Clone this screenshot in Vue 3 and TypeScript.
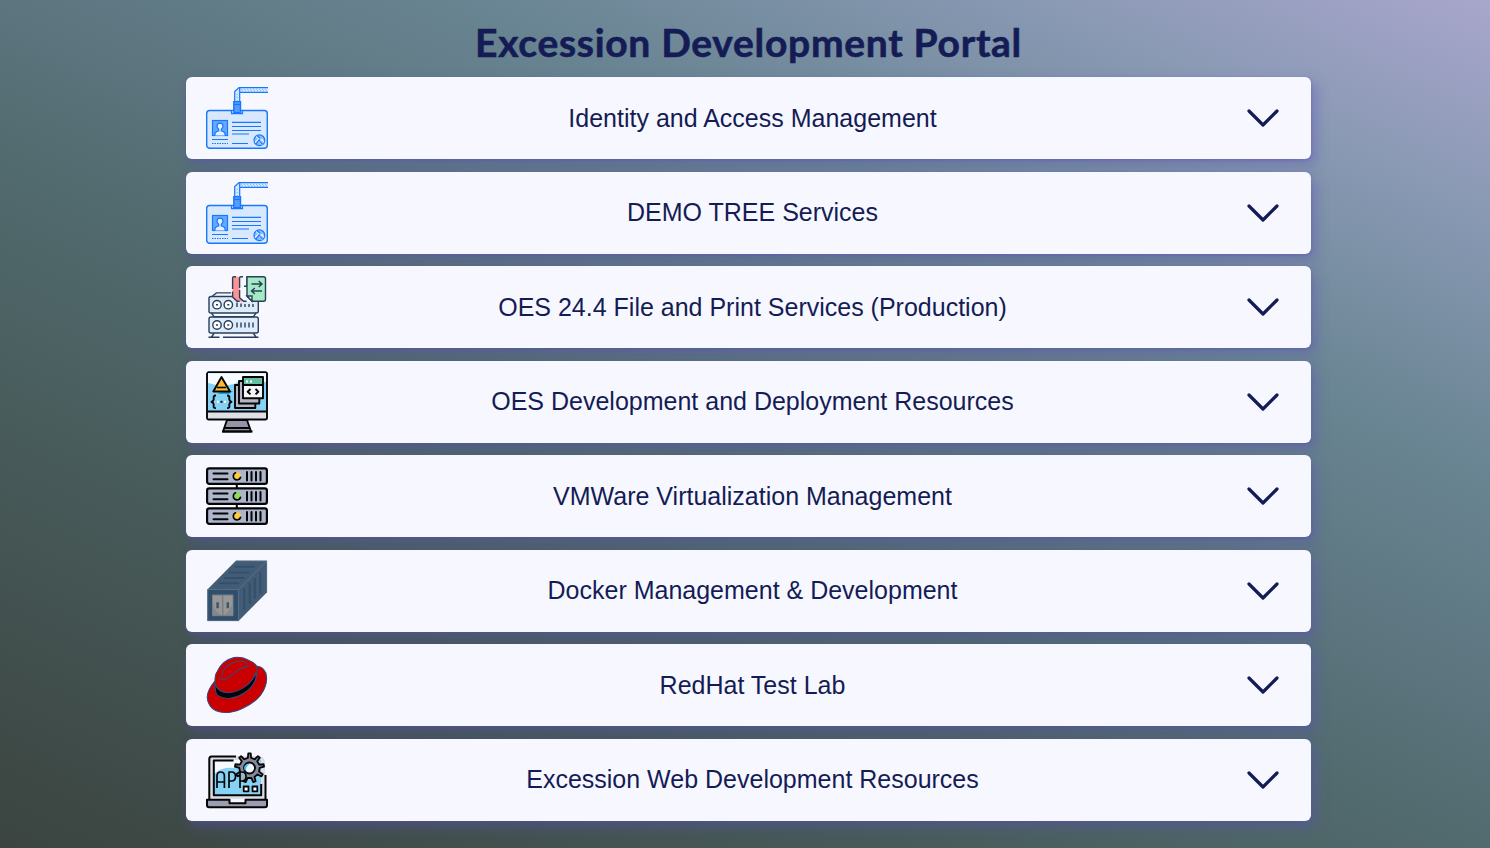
<script setup lang="ts">
type Icon = 'badge' | 'files' | 'dev' | 'servers' | 'container' | 'hat' | 'app'
const sections: { title: string; icon: Icon }[] = [
  { title: 'Identity and Access Management', icon: 'badge' },
  { title: 'DEMO TREE Services', icon: 'badge' },
  { title: 'OES 24.4 File and Print Services (Production)', icon: 'files' },
  { title: 'OES Development and Deployment Resources', icon: 'dev' },
  { title: 'VMWare Virtualization Management', icon: 'servers' },
  { title: 'Docker Management & Development', icon: 'container' },
  { title: 'RedHat Test Lab', icon: 'hat' },
  { title: 'Excession Web Development Resources', icon: 'app' },
]

// Outline of a cog: each tooth contributes two root and two tip points.
function cog(cx: number, cy: number, root: number, tip: number, teeth: number): string {
  const step = (Math.PI * 2) / teeth
  const points: string[] = []
  for (let i = 0; i < teeth; i++) {
    const a = i * step - Math.PI / 2
    for (const [offset, r] of [[-0.23, root], [-0.12, tip], [0.12, tip], [0.23, root]]) {
      const t = a + offset * step
      points.push(`${(cx + Math.cos(t) * r).toFixed(2)} ${(cy + Math.sin(t) * r).toFixed(2)}`)
    }
  }
  return `M${points.join('L')}Z`
}
const gear = cog(43.5, 19, 10.2, 14.6, 9)
</script>

<template>
  <main class="page">
    <h1 class="heading">Excession Development Portal</h1>
    <div class="list">
      <button v-for="s in sections" :key="s.title" class="card" type="button">
        <svg v-if="s.icon === 'badge'" class="icon" viewBox="0 0 62 62" fill="none" stroke="#1677ff" stroke-width="1.2">
          <path d="M28.700 15V4.500L33 .600H62V5.400H33.700V15z" fill="#d5e8ff" stroke="none"/>
          <path d="M28.700 15V4.500L33 .600H62M33.700 15V5.400H62M33.700 5.400V.600"/>
          <path d="M31.200 14V5M35 2.300h27M36 3.800h26" stroke="#69a9ff" stroke-width=".9" stroke-dasharray="1 2"/>
          <rect x=".7" y="23.500" width="60.600" height="37.800" rx="3" fill="#d8e9ff" stroke-width="1.400"/>
          <path d="M25.500 23.500h11v3.200h-11z" fill="#b8d7ff"/>
          <path d="M27.800 14.600h6.700v11h-6.700z" fill="#549cfa" stroke-width="1.400"/>
          <path d="M28 17.500h6.500"/>
          <rect x="6.500" y="33.500" width="15" height="15" fill="#66a8ff"/>
          <path d="M9 48.500v-2.500q2-2 3.700-2v-1.700Q11 41 11 39q.3-2.800 3-2.800t3 2.800q0 2-1.700 3.300V44q2 0 3.700 2v2.500" fill="#e4f0ff"/>
          <path d="M26 35.300h29M26 39.500h29M26 43.500h29M26 47h17M6 52.500h16M26 56.500h16"/>
          <path d="M6 56.500h16" stroke-dasharray="1.500 1"/>
          <circle cx="53.400" cy="53.300" r="5.400" fill="#8bbcff"/><path d="m49 55.500 3-3 4 5m-2-3 2-2 2 3m-8-6 3 2" stroke="#eaf4ff"/><path d="m50 57 3-4 3 4m-5-8 3 2"/>
        </svg>
        <svg v-else-if="s.icon === 'files'" class="icon" viewBox="0 0 62 62" fill="#deebfa" stroke="#293f59" stroke-width="1.4">
          <path d="M6.500 20 10.500 16.900h14.500" fill="none"/>
          <rect x="3" y="20.500" width="49.300" height="16.500" rx="2"/><rect x="3" y="41" width="49.300" height="16" rx="2"/>
          <path d="M5.500 37l2.500 3.600h39.500l2.500-3.600M8 57.500 5.500 61M47.500 57.500 50 61M2.500 61.200h11m3.500 0h35.500" fill="none"/>
          <g fill="white"><circle cx="11" cy="28.700" r="4.200"/><circle cx="22.300" cy="28.700" r="4.200"/><circle cx="11" cy="49" r="4.200"/><circle cx="22.300" cy="49" r="4.200"/></g>
          <path d="M10 28.700h2m9.300 0h2M10 49h2m9.300 0h2M31 46.500v5m4-5v5m4-5v5m4-5v5m4-5v5M31 26.500v4.500m4-3.500v3.500m4-3v3m4-3v3m4-3v3" fill="none"/>
          <path d="M26 0h34v26H31l-5-5z" fill="#f7f8ff" stroke="none"/>
          <path d="M26.600.7h7v21l4 3.800h-6l-5-4z" fill="#ff9293" stroke="none"/>
          <path d="M30 .7h-2q-1.400 0-1.400 1.300v11M26.600 15.500V21l4.500 4.300h2.500M37 .7h-2q-1.400 0-1.400 1.300v10M33.600 14v7.700l4 3.600h3M41 .7v9.500M38 10.200h3" fill="none"/>
          <path d="M41 .7h16.500q2 0 2 2v20.600q0 2-2 2H46l-5-5z" fill="#a4eac5"/>
          <path d="M46 25v-5h-5z" fill="#f7f8ff"/><path d="M45.500 8h10.500m-3.300-3 3.300 3-3.300 3M56 15H45.500m3.300-3-3.300 3 3.300 3" fill="none"/>
        </svg>
        <svg v-else-if="s.icon === 'dev'" class="icon" viewBox="0 0 62 62" fill="none" stroke="#050505" stroke-width="1.9" stroke-linejoin="round">
          <rect x="1" y="1.300" width="60" height="47.200" rx="1.800" fill="#dedfe7"/><path d="M2 2.300h58v38H2z" fill="#86d2f5" stroke="none"/><path d="M2 2.300h58v9Q43 5 28 13 15 16 2 12" fill="#f6fbff" stroke="none"/>
          <path d="M2 40.500h58"/><path d="M21 49h20l4 11.500H17z" fill="#9496a8"/><path d="M18 57h26M16 60.500h30.500"/>
          <path d="M17 20h10l-4 3H11z" fill="#199fd4" stroke="none"/><path d="M15.500 6 7.300 20.500H24z" fill="#ffb832"/><path d="M11 16.500h9" stroke-width="1.600"/>
          <path d="M10 24.500c-3.500 0-2 2-2.300 3.800-.2 1.400-1 2-2.200 2.500 1.200.5 2 1.100 2.200 2.500.3 1.800-1.200 3.800 2.300 3.800M21 24.500c3.500 0 2 2 2.300 3.800.2 1.400 1 2 2.200 2.500-1.200.5-2 1.100-2.200 2.500-.3 1.800 1.200 3.800-2.300 3.800"/>
          <path d="M11 30.800h2m5 0h2" stroke="white"/><path d="M14.500 30.800h2"/>
          <path d="M33 14h-4v23h20.300v-4" fill="#b4b6c6"/><path d="M37 10h-4v22.500h20.300V28" fill="#b4b6c6"/><rect x="37" y="6" width="20" height="21.300" fill="#f5f5fa"/><path d="M38 7h18v6.300H38z" fill="#65bfa0" stroke="none"/><path d="M37 14h20M44.500 18l-2.800 2.700 2.800 2.700M49.500 18l2.800 2.700-2.800 2.700"/><path d="M40 10.500h2m2 0h2" stroke="white"/>
        </svg>
        <svg v-else-if="s.icon === 'servers'" class="icon" viewBox="0 0 62 62" fill="none" stroke="#050505" stroke-width="2" stroke-linecap="round">
          <path d="M30.800 19v24"/>
          <g v-for="i in 3" :key="i" :transform="`translate(0 ${(i - 1) * 20})`">
            <rect x="1.100" y="3.300" width="59.800" height="15.600" rx="2.200" fill="#adb5cb" stroke-width="2.200"/><path d="M7.500 8.500h14M7.500 14.200h14M41 7v8.500m4.500-8.500v8.500m4.500-8.500v8.500m4.500-8.500v8.500"/>
            <circle cx="31.300" cy="11" r="3.700" :fill="i === 2 ? '#8dde59' : '#ffcb42'" stroke="none"/><path d="M29.500 7.800a3.700 3.700 0 1 0 5 4.600" stroke-width="1.700"/>
          </g>
        </svg>
        <svg v-else-if="s.icon === 'container'" class="icon" viewBox="0 0 62 62" fill="none">
          <path d="M1.500 29.500 30 .700h31v31.500L32.500 61h-31z" fill="#435c75"/><path d="M1.500 29.500h31V61h-31z" fill="#304e6e"/>
          <path d="M1.800 60.700V29.500h30.700v31.200zm30.700-31.200L60.700.900v31.300L32.500 60.700M1.800 29.500 30 .900h30.700" stroke="#64788d" stroke-width=".7"/>
          <path d="M28.500 6.800H49M23 12.500h20.500M18 18h20.500M12.700 23.200h20.500M38.300 28v21.500M43.700 23v21M48.800 18v21M54.300 12.500V34" stroke="#344f6b" stroke-width="2"/>
          <path d="M6.500 35h20.500v20.700H6.500z" fill="#989797" stroke="#757f86"/><path d="M16.800 35v20.500" stroke="#6d7275"/><path d="M7 45v10.200h9Q9 52 7 45M18 55.200h8.500V43q-2 8-8.500 12.200" fill="#85898b"/><path d="M11.600 42.300v6m10.200-6v6" stroke="#3f556b" stroke-width="2.500"/>
        </svg>
        <svg v-else-if="s.icon === 'hat'" class="icon" viewBox="0 0 62 62" fill="#ca0000" stroke="#3e4477" stroke-width="1.100" stroke-linejoin="round">
          <path d="M9 27C3 34 1.500 38 1.200 43c0 5 3 12 11 14.500 7 2 17 1 25-3.500 8-4 14-8 17.500-13C59 35 61 29 60.500 23c-.3-6-4-10-9.800-11z"/>
          <path d="M9 27c0-4 .2-7 2-9 3-7 9-12.500 17-14.400 6-1 11 .5 15 2.900 5 2 7 3.500 7.500 6.500.7 4 .6 8-.8 12C46 35 35 43 21 43.500 13 43.500 9 39 9 32z"/>
          <path d="M9.200 29.500C11 36 15 38.700 23 38.700 34 38 47 29 49.400 19c1.200 3 .7 6-1 9C44 37 34 43 24 44.400c-5 .4-9-.8-12.500-3C9 39 9 35 9.200 29.500z" fill="#050505"/>
          <path d="M12.500 23.300c2 2.200 6 3 9 1C26 21.500 29 17.500 34 15c4-2 6.500-2 9.600-3.300M15.800 22.700C15.500 18 19 13.500 23.500 10.500 29 7 35 6.500 40 8.300l1.300 2.200" fill="none"/>
        </svg>
        <svg v-else class="icon" viewBox="0 0 62 62" fill="none" stroke="#050505" stroke-width="2" stroke-linejoin="round">
          <path d="M3 50V9q0-2 2-2h47q7 0 7 7v36z" fill="#dcdde5" stroke="none"/><path d="M7 11h48v35H7z" fill="#86d2f5" stroke="none"/><path d="M7 11h45v6Q36 13 27 19 16 17 7 26" fill="#f4faff" stroke="none"/>
          <path d="M30 7.500H5.500Q3.300 7.500 3.300 10v40M27.500 11.600H7.800v34.600h47.400V35M59.500 26v24"/>
          <path d="M1 50.700h22.500v3.500h16v-3.500H61V56q0 2.200-2.200 2.200H3.200Q1 58.200 1 56z" fill="#9a9eb0"/>
          <path d="M11 39V27q0-4 3.700-4t3.700 4v12M11 33h7.400M23 39V23h2.500q4 0 4 4.500t-4 4.500H23" stroke-width="1.700"/>
          <path :d="gear" fill="#85899a" stroke-width="1.800"/>
          <circle cx="43.500" cy="19" r="5.500" fill="#e9f8ff" stroke-width="1.800"/><path d="M40 21.500q0-5 4-6-5-1-6 3 0 3 2 3" fill="#4bb9e6" stroke="none"/>
          <path d="M34 32V23H36q4 0 4 4.500T36 32z" fill="#9fb4c5" stroke="none"/>
          <path d="M34 39V23h2q4 0 4 4.500T36 32h-2" stroke-width="1.700"/>
          <path d="M37.700 37.500h4.800v4.800h-4.800zm8.800 0h4.800v4.800h-4.800z" fill="#fff" stroke-width="1.800"/>
        </svg>
        <span class="title">{{ s.title }}</span>
        <svg class="chevron" viewBox="0 0 32 18"><path d="M2 2l14 14L30 2" fill="none" stroke="#151c55" stroke-width="3.200" stroke-linecap="round" stroke-linejoin="round"/></svg>
      </button>
    </div>
  </main>
</template>

<style>
body { margin: 0; overflow: hidden; }
</style>
<style scoped>
.page { box-sizing: border-box; width: 1490px; height: 848px; padding: 17px 179px 0 186px; background: linear-gradient(25deg, #3b4440 0%, #475a59 26%, #526b6f 45%, #5c757f 55%, #6a8593 70%, #8798b2 85%, #a8a6cc 100%); }
.heading { margin: 0; height: 60px; text-align: center; white-space: nowrap; font: 700 39px/50px Lato, sans-serif; letter-spacing: .7px; -webkit-text-stroke: .6px #151c55; color: #151c55; }
.list { display: flex; flex-direction: column; gap: 12.5px; }
.card { box-sizing: border-box; width: 1125px; height: 82px; display: flex; align-items: center; border: 0; border-radius: 6px; padding: 0 31.8px 0 20px; background: #f7f8ff; box-shadow: 0 1px 3px rgba(91, 82, 180, .4), 5px 6px 13px rgba(91, 82, 180, .42); color: #151c55; font: 25px "Liberation Sans", Arial, sans-serif; }
.icon { width: 62px; height: 62px; flex: none; overflow: visible; }
.title { flex: 1; margin-right: 10.2px; padding-bottom: .5px; text-align: center; white-space: nowrap; line-height: 30px; }
.chevron { width: 32px; height: 18px; flex: none; }
</style>
